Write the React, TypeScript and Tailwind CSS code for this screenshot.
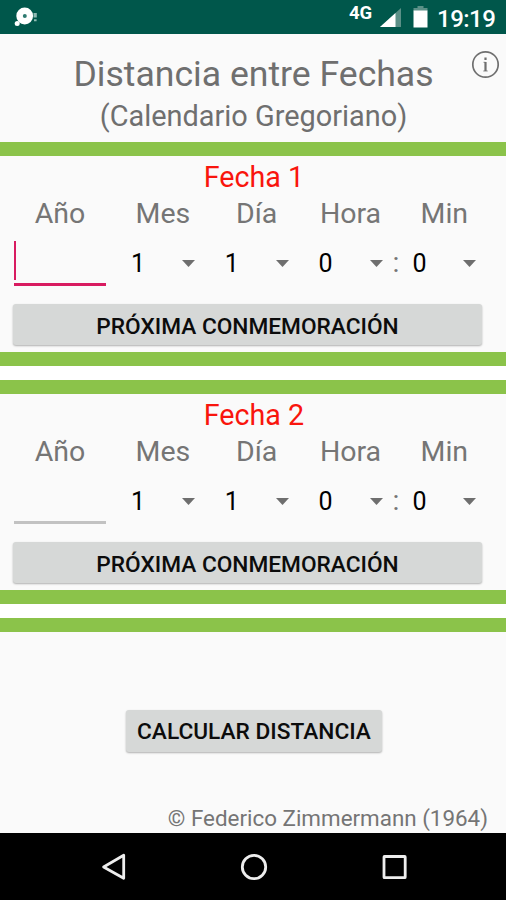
import clsx from 'clsx';

const LABELS = ['Mes', 'Día', 'Hora', 'Min'];

function StatusBar() {
  return (
    <div className="flex h-[34px] items-center bg-[#00574b] text-white">
      <svg className="ml-[14px] h-[24px] w-[26px]" viewBox="0 0 26 24">
        <circle cx="10.7" cy="11" r="8.4" fill="#fff" />
        <circle cx="10.8" cy="11" r="2" fill="#2e7a70" />
        <circle cx="3.2" cy="18.6" r="2.5" fill="#fff" />
        <path d="M19.5 8h3.3v4.5h-3.3zM20 14.3h2.6v2H20z" fill="#8fbab3" />
      </svg>
      <div className="ml-auto flex h-full items-center pr-[10px]">
        <span className="-mt-[8px] w-[26px] text-[18.5px] leading-none font-bold">4G</span>
        <svg className="ml-[5px] h-[20px] w-[22px]" viewBox="0 0 22 20">
          <path d="M21 1v19H0z" fill="#5b9087" />
          <path d="M15.5 6v14H0z" fill="#fff" />
        </svg>
        <svg className="ml-[11px] h-[22px] w-[15px]" viewBox="0 0 15 22">
          <path d="M4.5 0h6v2h4v3H.5V2h4z" fill="#5b9087" />
          <path d="M.5 4.5h14v17H.5z" fill="#fff" />
        </svg>
        <span className="mt-[3px] ml-[9px] w-[59px] text-[24px] leading-none font-medium tracking-[-0.5px] whitespace-nowrap">19:19</span>
      </div>
    </div>
  );
}

function Stripe() {
  return <div className="h-[14px] bg-[#8bc34a]" />;
}

function Spinner({ value }: { value: string }) {
  return (
    <div className="flex w-[64px] items-center justify-between">
      <span className="text-[25px] leading-[65px] text-black">{value}</span>
      <svg className="h-[7px] w-[13px]" viewBox="0 0 13 7">
        <path d="M0 0h13L6.5 7z" fill="#6e6e6e" />
      </svg>
    </div>
  );
}

function DateBlock({ title, focused }: { title: string; focused?: boolean }) {
  return (
    <section>
      <Stripe />
      <div className="h-[196px] pt-[3px]">
        <h2 className="pl-[2px] text-center text-[28.7px] leading-[36px] text-[#f9150d]">{title}</h2>
        <div className="flex h-[36px] pl-[4px] text-center text-[28.5px] leading-[38px] text-[#757575]">
          <span className="w-[112px]">Año</span>
          {LABELS.map((label) => (
            <span key={label} className="w-[93.8px]">{label}</span>
          ))}
        </div>
        <div className="flex h-[64px] pl-[14px]">
          <div
            className={clsx(
              'mt-[10px] h-[45px] w-[92px] border-b-[3px]',
              focused ? 'border-[#d81b60]' : 'border-[#c2c2c2]',
            )}
          >
            {focused && <div className="h-[39px] w-[2px] bg-[#d81b60]" />}
          </div>
          <div className="ml-[25px] flex">
            <Spinner value="1" />
            <div className="w-[29.8px]" />
            <Spinner value="1" />
            <div className="w-[29.8px]" />
            <Spinner value="0" />
            <div className="w-[29.8px] pl-[10px] text-[28.5px] leading-[64px] text-[#757575]">:</div>
            <Spinner value="0" />
          </div>
        </div>
        <button className="mt-[9px] ml-[13px] block h-[41px] w-[469px] rounded-[3px] bg-[#d6d8d7] text-[22.7px] leading-[45px] font-medium text-[#0c0c0c] shadow-[0_1px_2px_rgba(0,0,0,0.3)]">
          PRÓXIMA CONMEMORACIÓN
        </button>
      </div>
      <Stripe />
    </section>
  );
}

function NavBar() {
  return (
    <div className="flex h-[67px] justify-between bg-black pt-[19px] pr-[98px] pl-[100px]">
      <svg className="h-[30px] w-[26px]" viewBox="0 0 26 30" fill="none" stroke="#eee" strokeWidth="2.8">
        <path d="M23.7 3.3v23L3.6 15z" strokeLinejoin="round" />
      </svg>
      <svg className="h-[30px] w-[28px]" viewBox="0 0 28 30" fill="none" stroke="#eee" strokeWidth="2.8">
        <circle cx="14" cy="15" r="11.7" />
      </svg>
      <svg className="h-[30px] w-[26px]" viewBox="0 0 26 30" fill="none" stroke="#eee" strokeWidth="2.8">
        <rect x="2" y="4.5" width="21.2" height="21.2" rx="0.5" />
      </svg>
    </div>
  );
}

export default function App() {
  return (
    <div className="flex h-[900px] w-[506px] flex-col overflow-hidden bg-[#fafafa] font-[Roboto,sans-serif]">
      <StatusBar />
      <header className="relative h-[108px] pt-[18px] pl-[1px] text-center text-[#6f6f6f]">
        <h1 className="text-[35.6px] leading-[45px]">Distancia entre Fechas</h1>
        <p className="text-[28.9px] leading-[39px]">(Calendario Gregoriano)</p>
        <svg className="absolute top-[16px] right-[6px] h-[29px] w-[29px]" viewBox="0 0 29 29" fill="none" stroke="#6f6f6f">
          <circle cx="14.5" cy="14.5" r="12.7" strokeWidth="1.7" />
          <path d="M14.5 12v9M14.5 7.5v2.6" strokeWidth="2.2" />
          <path d="M12.5 12.3h2M12.3 21h4.4" strokeWidth="0.8" />
        </svg>
      </header>
      <DateBlock title="Fecha 1" focused />
      <div className="h-[14px] bg-white" />
      <DateBlock title="Fecha 2" />
      <div className="h-[14px] bg-white" />
      <Stripe />
      <div className="flex grow flex-col">
        <button className="mt-[78px] ml-[126px] h-[42px] w-[256px] rounded-[3px] bg-[#d6d8d7] text-[22.7px] leading-[44px] font-medium whitespace-nowrap text-[#0c0c0c] shadow-[0_1px_2px_rgba(0,0,0,0.3)]">
          CALCULAR DISTANCIA
        </button>
        <p className="mt-auto pr-[18px] text-right text-[22.4px] leading-[29px] text-[#757575]">
          © Federico Zimmermann (1964)
        </p>
      </div>
      <NavBar />
    </div>
  );
}
